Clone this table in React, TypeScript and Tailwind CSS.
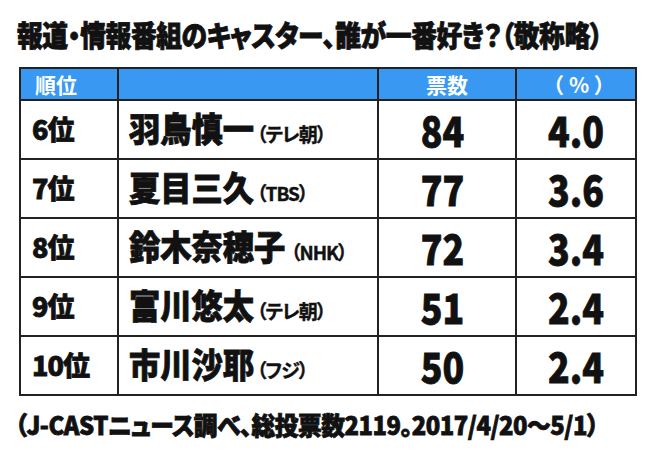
const rows = [
  { rank: '6位', name: '羽鳥慎一', station: '（テレ朝）', votes: '84', pct: '4.0' },
  { rank: '7位', name: '夏目三久', station: '（TBS）', votes: '77', pct: '3.6' },
  { rank: '8位', name: '鈴木奈穂子', station: '（NHK）', votes: '72', pct: '3.4' },
  { rank: '9位', name: '富川悠太', station: '（テレ朝）', votes: '51', pct: '2.4' },
  { rank: '10位', name: '市川沙耶', station: '（フジ）', votes: '50', pct: '2.4' },
];

const font = "font-['Noto_Sans_CJK_JP','Noto_Sans',sans-serif]";
const heavy = '[-webkit-text-stroke:0.8px_#111]';

export default function App() {
  return (
    <div className={`w-[645px] h-[456px] bg-white text-[#111] overflow-hidden ${font}`}>
      {/* title */}
      <div className="pl-[17px] pt-[14px] h-[67px]">
        <span className={`inline-block origin-left scale-x-[0.89] text-[29px] leading-[40px] font-black tracking-[-0.5px] whitespace-nowrap [font-feature-settings:'palt'] ${heavy}`}>
          報道・情報番組のキャスター、誰が一番好き？（敬称略）
        </span>
      </div>

      <div className="pl-[19px]">
        <table className="border-collapse border-2 border-[#222] table-fixed w-[616px]">
          <colgroup>
            <col className="w-[98px]" />
            <col className="w-[260px]" />
            <col className="w-[138px]" />
            <col className="w-[120px]" />
          </colgroup>
          <thead>
            <tr className="h-[32px] bg-[#3898f2] text-white text-[21px] font-bold leading-none">
              <th className="border-2 border-[#222] text-left pl-[14px] font-bold">順位</th>
              <th className="border-2 border-[#222]"></th>
              <th className="border-2 border-[#222] font-bold">票数</th>
              <th className="border-2 border-[#222] font-bold pl-[6px]">（ % ）</th>
            </tr>
          </thead>
          <tbody>
            {rows.map((r) => (
              <tr key={r.rank} className="h-[59px]">
                <td className={`border-2 border-[#222] pl-[11px] text-[27px] font-black whitespace-nowrap tracking-[-1px] ${heavy}`}>
                  {r.rank}
                </td>
                <td className="border-2 border-[#222] pl-[10px] whitespace-nowrap">
                  <span className={`inline-block origin-left scale-x-[0.92] text-[34px] font-black leading-none ${heavy}`}>{r.name}</span>
                  <span className="text-[19px] font-bold -ml-[8px] [font-feature-settings:'palt'] tracking-[-1px] [-webkit-text-stroke:0.4px_#111]">{r.station}</span>
                </td>
                <td className="border-2 border-[#222] text-center pr-[8px]">
                  <span className={`inline-block scale-x-[0.85] text-[42px] font-black leading-none ${heavy}`}>{r.votes}</span>
                </td>
                <td className="border-2 border-[#222] text-center">
                  <span className={`inline-block scale-x-[0.85] text-[42px] font-black leading-none ${heavy}`}>{r.pct}</span>
                </td>
              </tr>
            ))}
          </tbody>
        </table>
      </div>

      {/* footer note */}
      <div className="pl-[15px] pt-[10px]">
        <span className={`inline-block origin-left scale-x-[0.95] text-[25px] leading-[36px] font-black whitespace-nowrap tracking-[-0.5px] [font-feature-settings:'palt'] ${heavy}`}>
          （J-CASTニュース調べ、総投票数2119。2017/4/20～5/1）
        </span>
      </div>
    </div>
  );
}
